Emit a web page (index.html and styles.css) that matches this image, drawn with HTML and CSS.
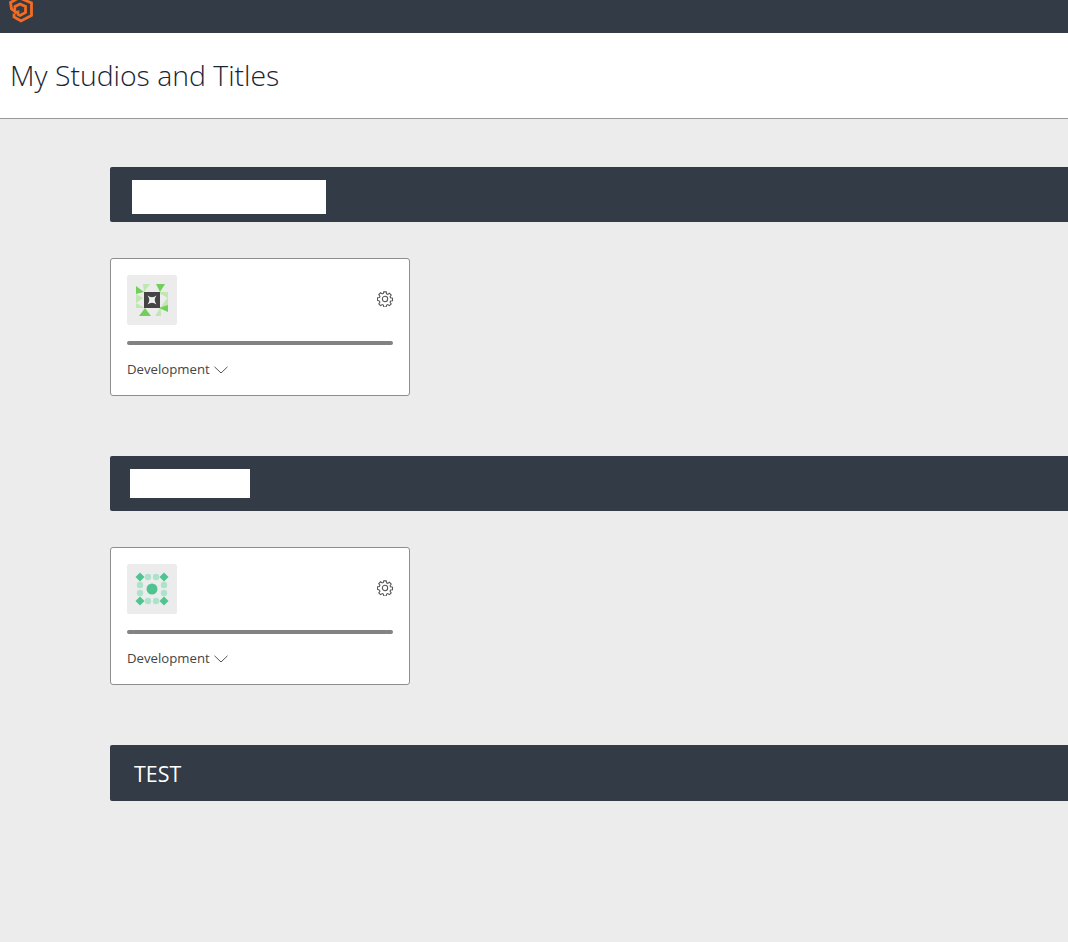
FILE: index.html
```html
<!DOCTYPE html>
<html lang="en">
<head>
<meta charset="utf-8">
<title>My Studios and Titles</title>
<link rel="stylesheet" href="styles.css">
</head>
<body>
<header class="topbar">
  <svg class="logo" width="24" height="24" viewBox="0 0 24 24" fill="none" stroke="#f36c21" stroke-width="2.8" stroke-linejoin="miter">
    <path d="M13 -1 L22.500 3 L22.500 15.500 L12 21 L5 17 L5 13.500"/>
    <path d="M9.500 -2 L1.500 2.500 L2.500 9 L6.500 12"/>
    <path d="M7.500 13.500 L5.500 10.500 L6 6.500 L11 4 L16.500 6.500 L16.500 12.500 L11 15.500 L9 14.500 L9 10.500"/>
  </svg>
</header>
<div class="titlebar">
  <h1 class="page-title">My Studios and Titles</h1>
</div>
<main class="content">
  <section class="studio">
    <div class="studio-bar"><div class="redact redact-a"></div></div>
    <article class="card">
      <div class="card-top">
        <div class="thumb">
          <svg width="50" height="50" viewBox="0 0 50 50">
            <g fill="#bfe8b0">
              <path d="M16 9h7l-6 8z"/><path d="M30 17h11v6z"/>
              <path d="M33 33l8-11v10z"/><path d="M28 41l6-9v9z"/>
              <path d="M9 28l9 5H9z"/><path d="M9 19l7 4-7 5z"/>
            </g>
            <g fill="#72cf5a">
              <path d="M9 11l8 6-8 2z"/><path d="M29 9h9l-5 8z"/>
              <path d="M32 33l9-3v7z"/><path d="M12 41l6-8 6 8z"/>
            </g>
            <rect x="17" y="17" width="16" height="16" fill="#444"/>
            <path d="M20.500 20.500Q25 24 29.500 20.500Q26 25 29.500 29.500Q25 26 20.500 29.500Q24 25 20.500 20.500z" fill="#eee"/>
          </svg>
        </div>
        <svg class="gear" width="16" height="16" viewBox="0 0 18 18" fill="none" stroke="#555" stroke-width="1.200">
          <path d="M7.600 1h2.800l.4 2.200 1.300.6 1.900-1.300 2 2-1.300 1.900.6 1.300 2.200.4v2.800l-2.200.4-.6 1.300 1.300 1.900-2 2-1.900-1.300-1.300.6-.4 2.200H7.600l-.4-2.200-1.300-.6-1.900 1.300-2-2 1.300-1.900-.6-1.300L.5 10.400V7.600l2.200-.4.6-1.300L2 4l2-2 1.900 1.300 1.300-.6z"/>
          <circle cx="9" cy="9" r="3"/>
        </svg>
      </div>
      <div class="progress"></div>
      <div class="env">
        <span class="env-label">Development</span>
        <svg class="chevron" width="14" height="8" viewBox="0 0 14 8" fill="none" stroke="#555" stroke-width="1"><path d="M.5 .8 7 7 13.500 .8"/></svg>
      </div>
    </article>
  </section>
  <section class="studio">
    <div class="studio-bar"><div class="redact redact-b"></div></div>
    <article class="card">
      <div class="card-top">
        <div class="thumb">
          <svg width="50" height="50" viewBox="0 0 50 50">
            <g fill="#ace3ca">
              <circle cx="21" cy="13" r="3.200"/><circle cx="29" cy="13" r="3.200"/>
              <circle cx="21" cy="37" r="3.200"/><circle cx="29" cy="37" r="3.200"/>
              <circle cx="13" cy="21" r="3.200"/><circle cx="13" cy="29" r="3.200"/>
              <circle cx="37" cy="21" r="3.200"/><circle cx="37" cy="29" r="3.200"/>
            </g>
            <g fill="#4fc490">
              <path d="M13 8.500l4.500 4.500-4.500 4.500-4.500-4.500z"/><path d="M37 8.500l4.500 4.500-4.500 4.500-4.500-4.500z"/>
              <path d="M13 32.500l4.500 4.500-4.500 4.500-4.500-4.500z"/><path d="M37 32.500l4.500 4.500-4.500 4.500-4.500-4.500z"/>
              <circle cx="25" cy="25" r="5.500"/>
            </g>
          </svg>
        </div>
        <svg class="gear" width="16" height="16" viewBox="0 0 18 18" fill="none" stroke="#555" stroke-width="1.200">
          <path d="M7.600 1h2.800l.4 2.200 1.300.6 1.900-1.300 2 2-1.300 1.900.6 1.300 2.200.4v2.800l-2.200.4-.6 1.300 1.300 1.900-2 2-1.900-1.300-1.300.6-.4 2.200H7.600l-.4-2.200-1.300-.6-1.900 1.300-2-2 1.300-1.900-.6-1.300L.5 10.400V7.600l2.200-.4.6-1.300L2 4l2-2 1.900 1.300 1.300-.6z"/>
          <circle cx="9" cy="9" r="3"/>
        </svg>
      </div>
      <div class="progress"></div>
      <div class="env">
        <span class="env-label">Development</span>
        <svg class="chevron" width="14" height="8" viewBox="0 0 14 8" fill="none" stroke="#555" stroke-width="1"><path d="M.5 .8 7 7 13.500 .8"/></svg>
      </div>
    </article>
  </section>
  <section class="studio">
    <div class="studio-bar studio-bar-text"><h2 class="studio-name">TEST</h2></div>
  </section>
</main>
</body>
</html>
```
FILE: styles.css
```css
html, body {
  margin: 0;
  padding: 0;
}
body {
  background: #ececec;
  font-family: "Open Sans", sans-serif;
  min-height: 942px;
  overflow: hidden;
}
.topbar {
  height: 33px;
  background: #333b46;
  overflow: hidden;
}
.logo {
  display: block;
  margin-left: 9px;
  margin-top: 0;
}
.titlebar {
  background: #fff;
  height: 85px;
  border-bottom: 1px solid #999;
  display: flex;
  align-items: center;
  padding-left: 10px;
}
.page-title {
  margin: 0 0 1px;
  font-weight: 300;
  font-size: 28.4px;
  line-height: 36px;
  color: #1a2533;
}
.content {
  padding: 48px 0 0 110px;
  display: flex;
  flex-direction: column;
  gap: 60px;
}
.studio-bar {
  height: 55px;
  background: #333b46;
  border-radius: 2px 0 0 2px;
  position: relative;
}
.studio-bar-text {
  height: 56px;
  display: flex;
  align-items: center;
  padding-left: 24px;
}
.studio-name {
  margin: 0;
  color: #fff;
  font-size: 21.4px;
  font-weight: 400;
}
.redact {
  position: absolute;
  background: #fff;
}
.redact-a {
  left: 22px;
  top: 13px;
  width: 194px;
  height: 34px;
}
.redact-b {
  left: 20px;
  top: 13px;
  width: 120px;
  height: 29px;
}
.card {
  box-sizing: border-box;
  width: 300px;
  height: 138px;
  margin-top: 36px;
  background: #fff;
  border: 1px solid #8e8e8e;
  border-radius: 3px;
  padding: 16px 16px 0;
}
.card-top {
  display: flex;
  align-items: center;
  justify-content: space-between;
}
.thumb {
  width: 50px;
  height: 50px;
  background: #ececec;
  border-radius: 2px;
}
.thumb svg {
  display: block;
}
.gear {
  margin-bottom: 2px;
}
.progress {
  height: 4px;
  margin-top: 16px;
  background: #828282;
  border-radius: 2px;
}
.env {
  display: flex;
  align-items: center;
  gap: 4px;
  margin-top: 15px;
  height: 19px;
}
.env-label {
  font-size: 13.2px;
  line-height: 19px;
  color: #444;
}
.chevron {
  display: block;
}
```
